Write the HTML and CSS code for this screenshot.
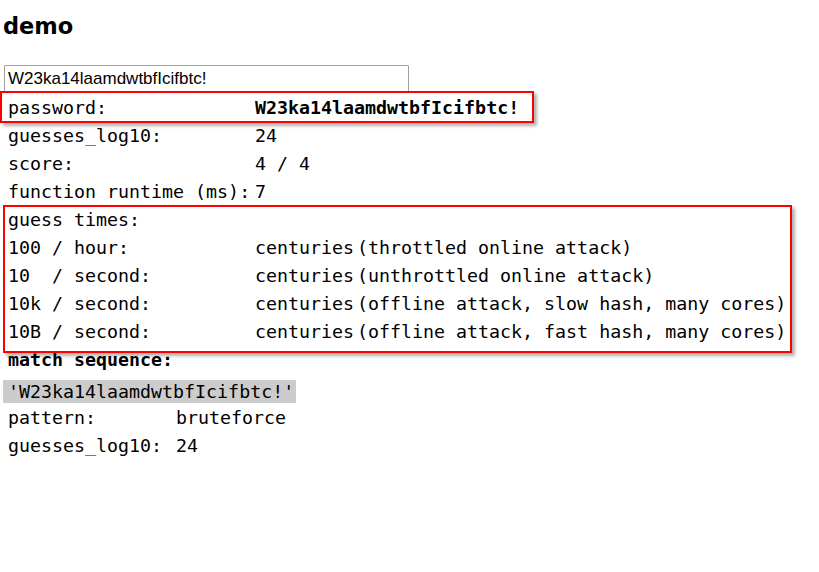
FILE: index.html
```html
<!DOCTYPE html>
<html>
<head>
<meta charset="utf-8">
<title>demo</title>
<link rel="stylesheet" href="styles.css">
</head>
<body>
<div class="page">
  <h1 class="title">demo</h1>
  <input class="pw-input" type="text" value="W23ka14laamdwtbfIcifbtc!">
  <div class="results">
    <div class="lbl">password:</div><div class="val span2 strong">W23ka14laamdwtbfIcifbtc!</div>
    <div class="lbl">guesses_log10:</div><div class="val span2">24</div>
    <div class="lbl">score:</div><div class="val span2">4 / 4</div>
    <div class="lbl">function runtime (ms):</div><div class="val span2">7</div>
    <div class="lbl span3">guess times:</div>
    <div class="lbl">100 / hour:</div><div class="val">centuries</div><div class="val">(throttled online attack)</div>
    <div class="lbl">10  / second:</div><div class="val">centuries</div><div class="val">(unthrottled online attack)</div>
    <div class="lbl">10k / second:</div><div class="val">centuries</div><div class="val">(offline attack, slow hash, many cores)</div>
    <div class="lbl">10B / second:</div><div class="val">centuries</div><div class="val">(offline attack, fast hash, many cores)</div>
    <div class="lbl span3 strong">match sequence:</div>
  </div>
  <div class="token">'W23ka14laamdwtbfIcifbtc!'</div>
  <div class="match">
    <div class="lbl">pattern:</div><div class="val">bruteforce</div>
    <div class="lbl">guesses_log10:</div><div class="val">24</div>
  </div>
  <div class="mark mark-password"></div>
  <div class="mark mark-times"></div>
</div>
</body>
</html>
```
FILE: styles.css
```css
html, body {
  margin: 0;
  padding: 0;
  background: #ffffff;
  color: #000000;
}

.page {
  position: relative;
  box-sizing: border-box;
  width: 819px;
  min-height: 572px;
  padding-top: 12px;
}

.title {
  margin: 0 0 0 3px;
  font-family: "DejaVu Sans", Verdana, sans-serif;
  font-weight: bold;
  font-size: 22.5px;
  line-height: 28px;
  height: 28px;
}

.pw-input {
  display: block;
  box-sizing: border-box;
  margin: 25px 0 0 4px;
  width: 405px;
  height: 28px;
  padding: 0 3px;
  border: 1px solid #a0a0a0;
  border-radius: 1px;
  font-family: "Liberation Sans", Arial, sans-serif;
  font-size: 17px;
  color: #000;
  background: #fff;
  outline: none;
}

.results,
.match,
.token {
  font-family: "DejaVu Sans Mono", "Liberation Mono", monospace;
  font-size: 18.3px;
  white-space: pre;
}

.results {
  display: grid;
  grid-template-columns: 247px 102px auto;
  grid-auto-rows: 28px;
  align-items: center;
  margin-left: 8px;
}

.match {
  display: grid;
  grid-template-columns: 168px auto;
  grid-auto-rows: 28px;
  align-items: center;
  margin-left: 8px;
}

.span2 { grid-column: span 2; }
.span3 { grid-column: span 3; }
.strong { font-weight: bold; }

.token {
  display: inline-block;
  margin: 7px 0 0 3px;
  padding: 0 2px 0 5px;
  height: 23px;
  line-height: 23px;
  background: #cccccc;
}

.mark {
  position: absolute;
  box-sizing: border-box;
  border: 2px solid #ff0000;
  box-shadow: 3px 3px 3px rgba(0, 0, 0, 0.3);
  pointer-events: none;
}

.mark-password {
  left: 0;
  top: 91px;
  width: 534px;
  height: 32px;
}

.mark-times {
  left: 3px;
  top: 205px;
  width: 789px;
  height: 148px;
}
```
